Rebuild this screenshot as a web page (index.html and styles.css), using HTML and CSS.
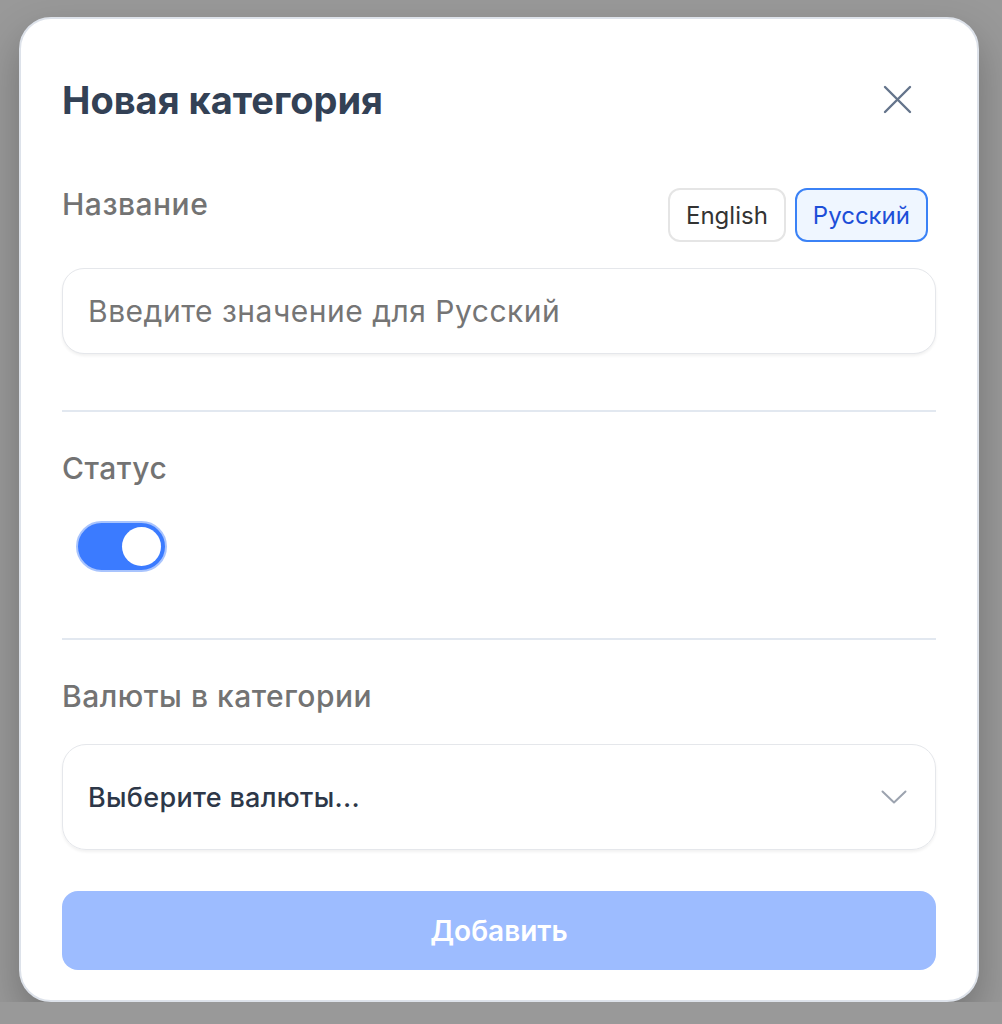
FILE: index.html
```html
<!DOCTYPE html>
<html lang="ru">
<head>
    <meta charset="UTF-8">
    <meta name="viewport" content="width=device-width, initial-scale=1.0">
    <title>Новая категория</title>
    <link rel="stylesheet" href="styles.css">
</head>
<body>

    <div class="modal">
        <div class="modal-header">
            <h2 class="modal-title">Новая категория</h2>
            <button class="close-btn" aria-label="Закрыть">
                <svg width="30" height="30" viewBox="0 0 30 30" fill="none" stroke="currentColor" stroke-width="2.4" stroke-linecap="round">
                    <path d="M3 2 L28 27 M28 2 L3 27"/>
                </svg>
            </button>
        </div>

        <div class="field-head">
            <label class="field-label">Название</label>
            <div class="lang-switch">
                <button class="lang-btn">English</button>
                <button class="lang-btn active">Русский</button>
            </div>
        </div>
        <input class="text-input" type="text" placeholder="Введите значение для Русский">

        <hr class="divider">

        <label class="field-label">Статус</label>
        <div class="toggle on">
            <span class="knob"></span>
        </div>

        <hr class="divider second">

        <label class="field-label">Валюты в категории</label>
        <div class="select">
            <span>Выберите валюты...</span>
            <svg width="26" height="14" viewBox="0 0 26 14" fill="none" stroke="currentColor" stroke-width="2" stroke-linecap="round" stroke-linejoin="round">
                <path d="M1.5 1.5 L13 12.5 L24.5 1.5"/>
            </svg>
        </div>

        <button class="submit-btn" disabled>Добавить</button>
    </div>

</body>
</html>
```

FILE: styles.css
```css
body {
    margin: 0;
    padding: 17px 0 0 19px;
    background: #999999;
    font-family: 'Inter', 'Noto Sans', sans-serif;
}

/* Modal card */
.modal {
    width: 874px;
    padding: 61px 41px 30px;
    background: #fff;
    border: 2px solid #dde2ea;
    border-radius: 32px;
    box-shadow: 0 18px 40px rgba(0, 0, 0, 0.25);
}

.modal-header {
    display: flex;
    justify-content: space-between;
    align-items: center;
    height: 40px;
    margin-bottom: 68px;
}

.modal-title {
    margin: 0;
    font-size: 38px;
    font-weight: 700;
    line-height: 40px;
    color: #334155;
}

.close-btn {
    background: none;
    border: none;
    padding: 0;
    margin-right: 24px;
    color: #64748b;
    display: flex;
    cursor: pointer;
}

/* Fields */
.field-label {
    display: block;
    font-size: 30px;
    font-weight: 500;
    line-height: 32px;
    letter-spacing: 0.5px;
    color: #737373;
}

.field-head {
    display: flex;
    justify-content: space-between;
    align-items: flex-start;
    margin-bottom: 26px;
}

.lang-switch {
    display: flex;
    gap: 9px;
    margin-right: 8px;
}

.lang-btn {
    height: 54px;
    padding: 0 16px;
    font-family: inherit;
    font-size: 24px;
    color: #333;
    background: #fff;
    border: 2px solid #e5e5e5;
    border-radius: 12px;
}

.lang-btn.active {
    color: #1d4ed8;
    background: #eff6ff;
    border-color: #3b82f6;
}

.text-input {
    display: block;
    box-sizing: border-box;
    width: 100%;
    height: 86px;
    padding: 0 25px;
    font-family: inherit;
    font-size: 30px;
    letter-spacing: 0.5px;
    color: #333;
    border: 1px solid #e5e7eb;
    border-radius: 22px;
    box-shadow: 0 2px 3px rgba(0, 0, 0, 0.06);
    outline: none;
}

.text-input::placeholder {
    color: #757575;
}

.divider {
    border: none;
    border-top: 2px solid #e2e8f0;
    margin: 56px 0 40px;
}

.divider.second {
    margin-top: 66px;
}

/* Toggle */
.toggle {
    position: relative;
    box-sizing: border-box;
    width: 91px;
    height: 51px;
    margin: 37px 0 0 14px;
    background: #3b7bff;
    border: 2px solid #a9c4fd;
    border-radius: 26px;
}

.knob {
    position: absolute;
    top: 4px;
    right: 4px;
    width: 39px;
    height: 39px;
    background: #fff;
    border-radius: 50%;
}

/* Select */
.select {
    display: flex;
    justify-content: space-between;
    align-items: center;
    box-sizing: border-box;
    height: 106px;
    margin-top: 32px;
    padding: 0 28px 0 25px;
    font-size: 27px;
    font-weight: 500;
    letter-spacing: 0.3px;
    color: #2d3748;
    border: 1px solid #e5e7eb;
    border-radius: 24px;
    box-shadow: 0 2px 3px rgba(0, 0, 0, 0.06);
}

.select svg {
    color: #9ca3af;
}

/* Submit */
.submit-btn {
    display: block;
    width: 100%;
    height: 79px;
    margin-top: 41px;
    font-family: inherit;
    font-size: 28px;
    font-weight: 600;
    color: #fff;
    background: #9dbcff;
    border: none;
    border-radius: 16px;
}
```
